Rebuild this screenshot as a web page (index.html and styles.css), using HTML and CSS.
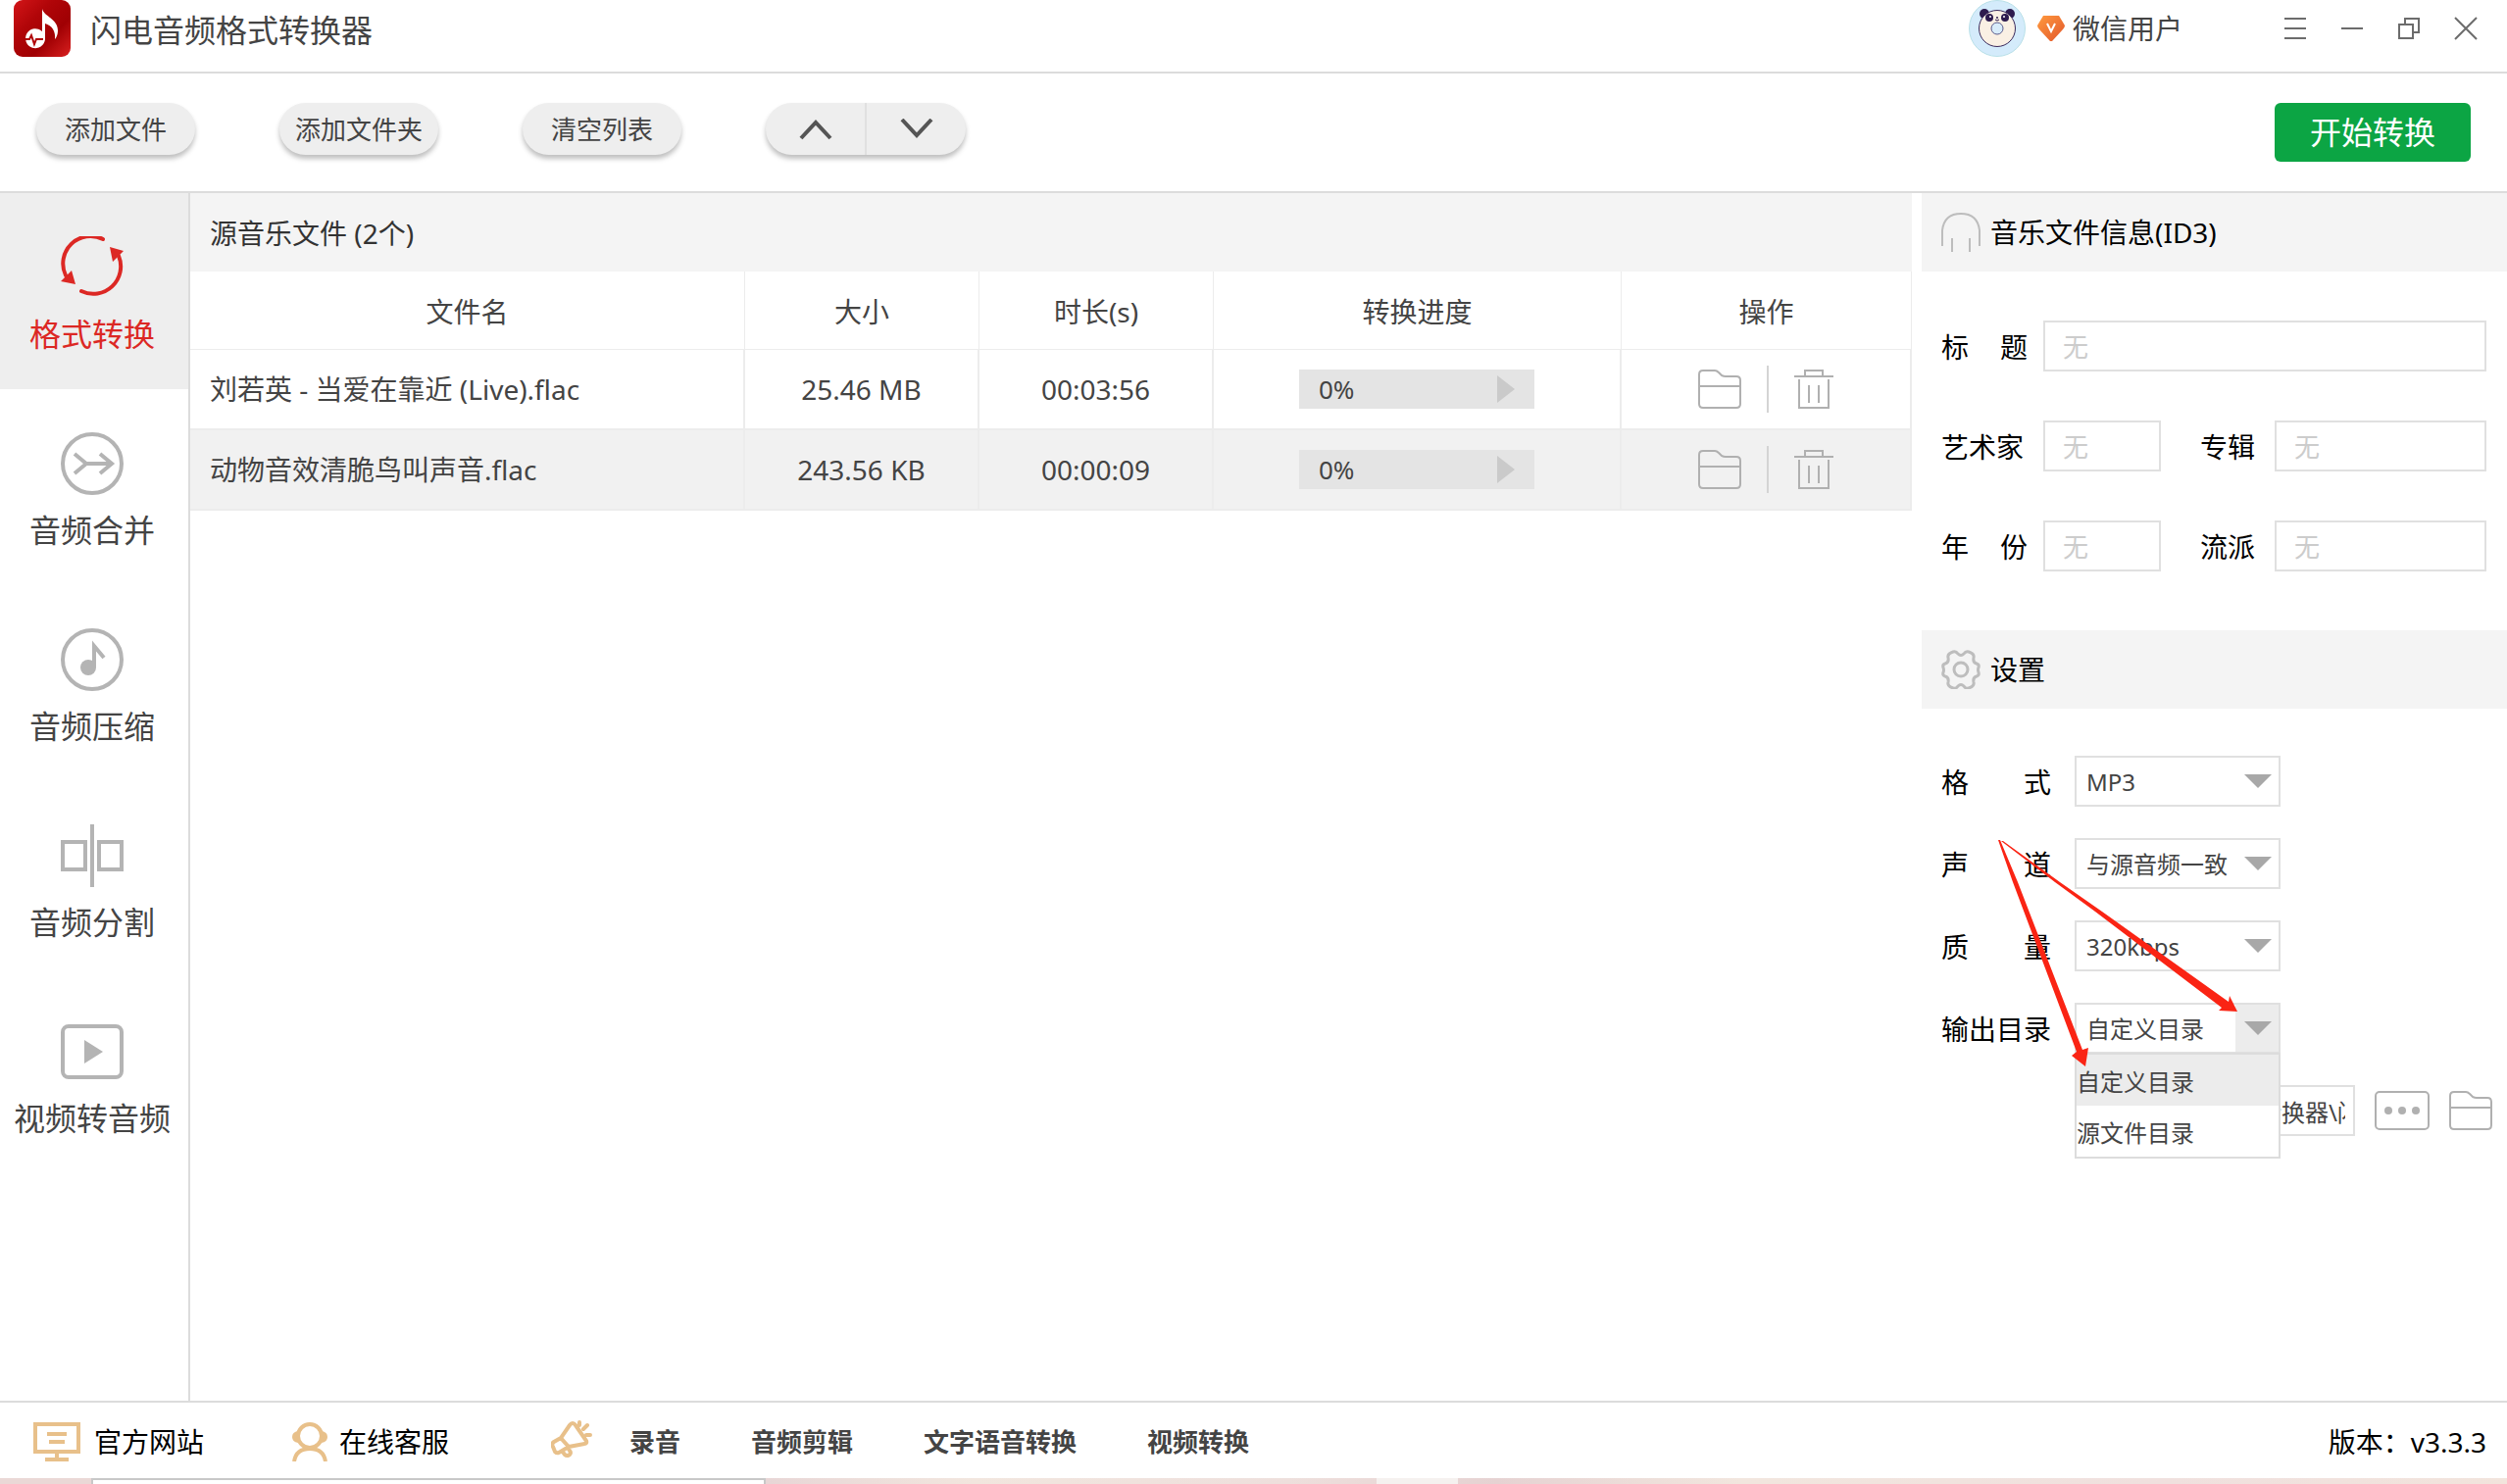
FILE: index.html
```html
<!DOCTYPE html>
<html lang="zh-CN">
<head>
<meta charset="utf-8">
<meta name="viewport" content="width=device-width, initial-scale=1">
<title>闪电音频格式转换器</title>
<link rel="stylesheet" href="styles.css">
</head>
<body>
<svg width="0" height="0" class="defs" aria-hidden="true">
  <symbol id="folder" viewBox="0 0 44 40">
    <path d="M1 35V5q0-4 4-4h12q2 0 4 2l3 3q2 1 4 1h11q4 0 4 4v24q0 4-4 4H5q-4 0-4-4zM1 17h42" fill="none" stroke="#b0b0b0" stroke-width="2"/>
  </symbol>
  <symbol id="trash" viewBox="0 0 40 40">
    <path d="M0 7h40M11 7V1h18v6M5 10v29h30V10M15 16v18M25 16v18" fill="none" stroke="#b0b0b0" stroke-width="2"/>
  </symbol>
</svg>

<div class="app">
  <header class="titlebar">
    <svg class="logo" viewBox="0 0 58 58" aria-hidden="true">
      <defs><linearGradient id="lg" x1="0" y1="0" x2="1" y2="1"><stop offset="0" stop-color="#d31518"/><stop offset=".35" stop-color="#b00508"/><stop offset=".65" stop-color="#a00003"/><stop offset="1" stop-color="#d92020"/></linearGradient></defs>
      <rect width="58" height="58" rx="9" fill="url(#lg)"/>
      <path d="M29 9c2 8 16 10 16 22 0 5-2 8-3 9 1-8-3-14-10-16v16a10 10 0 1 1-3-8z" fill="#fff"/>
      <path d="M12 40h4l2-4 3 9 2-5h7" fill="none" stroke="#b00508" stroke-width="2"/>
    </svg>
    <h1 class="app-name">闪电音频格式转换器</h1>
    <div class="user">
      <svg class="avatar" viewBox="0 0 58 58" aria-hidden="true">
        <circle cx="29" cy="29" r="28.500" fill="#d4ebfb" stroke="#b9e0e8"/>
        <circle cx="16" cy="14" r="5" fill="#2d1b4e"/><circle cx="42" cy="14" r="5" fill="#2d1b4e"/>
        <circle cx="29" cy="29" r="18.500" fill="#faf0e4" stroke="#3b2a5c"/>
        <circle cx="21" cy="18" r="4" fill="#2d1b4e"/><circle cx="37" cy="18" r="4" fill="#2d1b4e"/>
        <circle cx="22" cy="17" r="1" fill="#fff"/><circle cx="36" cy="17" r="1" fill="#fff"/>
        <path d="M27 20q2 2 4 0" fill="none" stroke="#2d1b4e"/><circle cx="29" cy="18" r="1" fill="#2d1b4e"/>
        <circle cx="29" cy="29" r="6" fill="#d8ecfa" stroke="#5b5c8c"/>
      </svg>
      <svg class="gem" viewBox="0 0 28 26" aria-hidden="true">
        <defs><linearGradient id="gg" x1="0" y1="0" x2="1" y2="1"><stop offset="0" stop-color="#ff9a3e"/><stop offset="1" stop-color="#e2572c"/></linearGradient></defs>
        <path d="M6 0h16l6 10q0 2-2 4L15 26h-2L2 14q-2-2-2-4z" fill="url(#gg)"/>
        <path d="M10 8l4 8 4-8" fill="none" stroke="#fff" stroke-width="2"/>
      </svg>
      <span>微信用户</span>
    </div>
    <div class="window-controls">
      <button type="button" aria-label="菜单"><svg viewBox="0 0 24 24"><path d="M1 2h22M1 12h22M1 22h22"/></svg></button>
      <button type="button" aria-label="最小化"><svg viewBox="0 0 24 24"><path d="M1 12h22"/></svg></button>
      <button type="button" aria-label="还原"><svg viewBox="0 0 24 24"><path d="M8 7V2h14v14h-6M2 8h14v14H2z"/></svg></button>
      <button type="button" aria-label="关闭"><svg viewBox="0 0 24 24"><path d="M1 1l22 22M23 1L1 23"/></svg></button>
    </div>
  </header>

  <div class="toolbar">
    <button type="button" class="pill">添加文件</button>
    <button type="button" class="pill">添加文件夹</button>
    <button type="button" class="pill">清空列表</button>
    <div class="pill-pair">
      <button type="button" aria-label="上移"><svg viewBox="0 0 34 22"><path d="M2 20L17 4l15 16"/></svg></button>
      <button type="button" aria-label="下移"><svg viewBox="0 0 34 22"><path d="M2 1l15 16L32 1"/></svg></button>
    </div>
    <button type="button" class="start">开始转换</button>
  </div>

  <div class="body">
    <nav class="sidebar">
      <a href="#format" class="nav-item active">
        <svg viewBox="0 0 64 64"><path d="M43 3A28 28 0 0 0 5 40M21 56A28 28 0 0 0 59 20" fill="none" stroke="#dc2824" stroke-width="4" stroke-linecap="round"/><path d="M50 11l14 4-11 11zM0 46l11-11 4 14z" fill="#dc2824"/></svg>
        <span>格式转换</span>
      </a>
      <a href="#merge" class="nav-item">
        <svg viewBox="0 0 64 64"><g fill="none" stroke="#b4b4b4" stroke-width="4"><circle cx="32" cy="32" r="30"/><path d="M14 22l12 10-12 10M26 32h25M40 22l12 10-12 10"/></g></svg>
        <span>音频合并</span>
      </a>
      <a href="#compress" class="nav-item">
        <svg viewBox="0 0 64 64"><circle cx="32" cy="32" r="30" fill="none" stroke="#b4b4b4" stroke-width="4"/><circle cx="28" cy="40" r="8" fill="#b4b4b4"/><path d="M34 40V18l10 12" fill="none" stroke="#b4b4b4" stroke-width="4"/></svg>
        <span>音频压缩</span>
      </a>
      <a href="#split" class="nav-item">
        <svg viewBox="0 0 64 64"><path d="M32 0v64M2 18h23v28H2zM39 18h23v28H39z" fill="none" stroke="#b4b4b4" stroke-width="4"/></svg>
        <span>音频分割</span>
      </a>
      <a href="#video" class="nav-item">
        <svg viewBox="0 0 64 64"><rect x="2" y="6" width="60" height="52" rx="6" fill="none" stroke="#b4b4b4" stroke-width="4"/><path d="M24 20l19 12-19 12z" fill="#b4b4b4"/></svg>
        <span>视频转音频</span>
      </a>
    </nav>

    <main class="files">
      <h2 class="band">源音乐文件 (2个)</h2>
      <table>
        <colgroup><col><col class="c-size"><col class="c-time"><col class="c-progress"><col class="c-ops"></colgroup>
        <thead><tr><th>文件名</th><th>大小</th><th>时长(s)</th><th>转换进度</th><th>操作</th></tr></thead>
        <tbody>
          <tr>
            <td class="name">刘若英 - 当爱在靠近 (Live).flac</td><td>25.46 MB</td><td>00:03:56</td>
            <td><div class="progress"><span>0%</span><svg viewBox="0 0 18 28"><path d="M0 0l18 14L0 28z"/></svg></div></td>
            <td><div class="ops"><button type="button" aria-label="打开文件夹"><svg class="i-folder"><use href="#folder"/></svg></button><i></i><button type="button" aria-label="删除"><svg class="i-trash"><use href="#trash"/></svg></button></div></td>
          </tr>
          <tr class="selected">
            <td class="name">动物音效清脆鸟叫声音.flac</td><td>243.56 KB</td><td>00:00:09</td>
            <td><div class="progress"><span>0%</span><svg viewBox="0 0 18 28"><path d="M0 0l18 14L0 28z"/></svg></div></td>
            <td><div class="ops"><button type="button" aria-label="打开文件夹"><svg class="i-folder"><use href="#folder"/></svg></button><i></i><button type="button" aria-label="删除"><svg class="i-trash"><use href="#trash"/></svg></button></div></td>
          </tr>
        </tbody>
      </table>
    </main>

    <aside class="panel">
      <h2 class="band panel-head">
        <svg viewBox="0 0 40 40"><path d="M1 34V18Q3 1 20 1t19 17v16M11 26v14M29 26v14" fill="none" stroke="#bdbdbd" stroke-width="2"/></svg>
        音乐文件信息(ID3)
      </h2>
      <form class="info">
        <label for="title" class="spread">标 题</label><input id="title" class="wide" placeholder="无">
        <label for="artist">艺术家</label><input id="artist" placeholder="无">
        <label for="album" class="second">专辑</label><input id="album" placeholder="无">
        <label for="year" class="spread">年 份</label><input id="year" placeholder="无">
        <label for="genre" class="second">流派</label><input id="genre" placeholder="无">
      </form>
      <h2 class="band panel-head">
        <svg viewBox="0 0 40 40"><g fill="none" stroke="#bdbdbd" stroke-width="3"><circle cx="20" cy="20" r="7"/><path d="M12 2q3-1 5 2 3 3 6 0 2-3 5-2 6 2 5 6-1 5 3 6 3 1 2 4-1 2 0 5 1 3-2 4-4 1-3 6 1 4-5 6-3 1-5-2-3-3-6 0-2 3-5 2-6-2-5-6 1-5-3-6-3-1-2-4 1-2 0-5-1-3 2-4 4-1 3-6-1-4 5-6z"/></g></svg>
        设置
      </h2>
      <form class="settings">
        <label for="format" class="spread">格 式</label>
        <div class="select"><select id="format"><option>MP3</option></select><svg viewBox="0 0 28 14"><path d="M0 0h28L14 14z"/></svg></div>
        <label for="channel" class="spread">声 道</label>
        <div class="select"><select id="channel"><option>与源音频一致</option></select><svg viewBox="0 0 28 14"><path d="M0 0h28L14 14z"/></svg></div>
        <label for="quality" class="spread">质 量</label>
        <div class="select"><select id="quality"><option>320kbps</option></select><svg viewBox="0 0 28 14"><path d="M0 0h28L14 14z"/></svg></div>
        <label for="outdir">输出目录</label>
        <div class="select open"><select id="outdir"><option>自定义目录</option><option>源文件目录</option></select><svg viewBox="0 0 28 14"><path d="M0 0h28L14 14z"/></svg>
          <ul class="menu" role="listbox"><li role="option" aria-selected="true">自定义目录</li><li role="option">源文件目录</li></ul>
        </div>
        <div class="path">
          <input aria-label="输出路径" value="D:\闪电音频格式转换器\闪电">
          <button type="button" aria-label="浏览"><svg class="i-more" viewBox="0 0 56 40"><rect x="1" y="1" width="54" height="38" rx="4" fill="none" stroke="#b0b0b0" stroke-width="2"/><g fill="#b0b0b0"><circle cx="14" cy="20" r="4"/><circle cx="28" cy="20" r="4"/><circle cx="42" cy="20" r="4"/></g></svg></button>
          <button type="button" aria-label="打开输出目录"><svg class="i-folder"><use href="#folder"/></svg></button>
        </div>
        <svg class="arrows" viewBox="0 0 250 240" aria-hidden="true"><path d="M0 0h2L20 43 86 214l6-2-3 19-14-11 5-4L15 43zM3 1h2L63 43l43 30 129 92 1-6 8 16-19-1 3-3L99 73 58 43z"/></svg>
      </form>
    </aside>
  </div>

  <footer class="footer">
    <a href="#site" class="f-site"><svg viewBox="0 0 48 40"><path d="M2 2h44v28H2zM24 30v8M12 38h24M14 12h20M16 20h16" fill="none" stroke="#e8c08a" stroke-width="4"/></svg>官方网站</a>
    <a href="#service" class="f-service"><svg viewBox="0 0 36 40"><g fill="none" stroke="#e8c08a" stroke-width="4"><circle cx="18" cy="14" r="12"/><path d="M2 40Q4 27 18 27t16 13"/></g><path d="M6 9v12q-6-1-6-6t6-6zM30 9v12q6-1 6-6t-6-6z" fill="#e8c08a"/></svg>在线客服</a>
    <svg class="horn" viewBox="0 0 42 38" aria-hidden="true"><path d="M19 5q3-4 6 0l11 16q1 3-2 3l-16 3-8-9zM10 18l-7 4q-3 2-1 5l2 5q2 2 4 1l10-6M11 31l3 4q3 2 5 0 2-2 0-4l-2-3M29 5V2M33 9l4-4M36 15h4" fill="none" stroke="#e8c08a" stroke-width="4" stroke-linecap="round"/></svg>
    <div class="links"><a href="#rec">录音</a><a href="#edit">音频剪辑</a><a href="#tts">文字语音转换</a><a href="#vconv">视频转换</a></div>
    <span class="version">版本：v3.3.3</span>
  </footer>
  <div class="desktop"><div class="behind"></div><div class="wallpaper"><i></i></div></div>
</div>
</body>
</html>
```
FILE: styles.css
```css
* { box-sizing: border-box; }
body {
  margin: 0;
  background: #fff;
  color: #444;
  font-family: "Noto Sans", "Noto Sans CJK SC", sans-serif;
  font-size: 28px;
  font-weight: 400;
  line-height: 40px;
}
h1, h2, ul { margin: 0; padding: 0; font-weight: inherit; }
button, input, select { font: inherit; color: inherit; border-radius: 0; }
button { padding: 0; border: 0; background: none; }
a { color: inherit; text-decoration: none; }
svg { display: block; flex: none; }
.defs { position: absolute; }

.app { display: flex; flex-direction: column; min-height: 100vh; }

/* title bar */
.titlebar {
  display: flex;
  align-items: flex-start;
  height: 75px;
  padding: 0 30px 0 14px;
  border-bottom: 2px solid #dcdcdc;
}
.logo { width: 58px; height: 58px; }
.app-name { margin-left: 20px; font-size: 32px; line-height: 62px; }
.user { display: flex; align-items: center; margin-left: auto; height: 58px; }
.avatar { width: 58px; height: 58px; }
.gem { width: 28px; height: 26px; margin: 0 8px 0 12px; }
.window-controls { display: flex; align-items: center; gap: 34px; height: 58px; margin-left: 103px; }
.window-controls svg { width: 24px; height: 24px; fill: none; stroke: #6c6c6c; stroke-width: 2; }

/* toolbar */
.toolbar {
  display: flex;
  align-items: flex-start;
  gap: 86px;
  height: 122px;
  padding: 30px 37px;
  border-bottom: 2px solid #dcdcdc;
}
.pill, .pill-pair {
  height: 53px;
  border-radius: 27px;
  background: #eee;
  box-shadow: 0 4px 5px rgba(0, 0, 0, .25);
}
.pill { width: 162px; font-size: 26px; line-height: 52px; white-space: nowrap; }
.pill-pair { display: flex; width: 204px; }
.pill-pair button { flex: 1; display: grid; place-items: center; }
.pill-pair button + button { border-left: 2px solid #e0e0e0; }
.pill-pair svg { width: 34px; height: 22px; fill: none; stroke: #555; stroke-width: 4; }
.start {
  width: 200px;
  height: 60px;
  margin-left: auto;
  border-radius: 6px;
  background: #0ca544;
  color: #fff;
  font-size: 32px;
}

/* body */
.body { display: flex; flex: 1; }
.sidebar { flex: none; width: 194px; border-right: 2px solid #dcdcdc; }
.nav-item {
  display: flex;
  flex-direction: column;
  align-items: center;
  gap: 16px;
  height: 200px;
  padding: 44px 4px 0 0;
  font-size: 32px;
  white-space: nowrap;
}
.nav-item svg { width: 64px; height: 64px; }
.nav-item.active { background: #eee; color: #dc2824; }

.files { flex: 1; min-width: 0; margin-right: 10px; }
.band { height: 80px; padding: 0 20px; background: #f4f4f4; font-size: 28px; line-height: 82px; color: #333; }
table { width: 100%; table-layout: fixed; border-collapse: separate; border-spacing: 0; }
.c-size, .c-time { width: 239px; }
.c-progress { width: 416px; }
.c-ops { width: 296px; }
th { height: 80px; padding: 2px 0 0; font-weight: inherit; border-right: 1px solid #ececec; border-bottom: 1px solid #ececec; }
td { height: 82px; padding: 0; text-align: center; border-right: 2px solid #ececec; border-bottom: 2px solid #ececec; }
td.name { padding-left: 20px; text-align: left; }
.selected td { background: #f1f1f1; }
.progress {
  display: flex;
  align-items: center;
  justify-content: space-between;
  width: 240px;
  height: 40px;
  margin: 0 auto;
  padding: 0 20px;
  background: #e4e4e4;
  font-size: 26px;
}
.progress svg { width: 18px; height: 28px; fill: #cacaca; }
.ops { display: flex; align-items: center; justify-content: center; gap: 26px; }
.ops i { width: 2px; height: 48px; background: #d4d4d4; }
.i-folder { width: 44px; height: 40px; }
.i-trash { width: 40px; height: 40px; }
.i-more { width: 56px; height: 40px; }

/* right panel */
.panel { flex: none; width: 597px; color: #000; }
.panel-head { display: flex; align-items: center; gap: 10px; color: #000; }
.panel-head svg { width: 40px; height: 40px; }
.info {
  display: grid;
  grid-template-columns: 104px 120px 116px 1fr;
  grid-auto-rows: 52px;
  row-gap: 50px;
  align-items: center;
  padding: 50px 21px 60px 20px;
}
.info label, .settings label { padding-top: 2px; white-space: nowrap; }
.info label { width: 88px; }
.info .second { width: auto; padding-left: 40px; }
.wide { grid-column: 2 / -1; }
.spread { text-align: justify; text-align-last: justify; }
input {
  width: 100%;
  min-width: 0;
  height: 52px;
  padding: 2px 18px 0;
  border: 2px solid #e0e0e0;
  background: #fff;
  font-size: 26px;
}
input::placeholder { color: #ccc; opacity: 1; }

.settings {
  position: relative;
  display: grid;
  grid-template-columns: 112px 210px;
  grid-auto-rows: 52px;
  gap: 32px 24px;
  align-items: center;
  padding: 48px 15px 48px 20px;
}
.select { position: relative; height: 52px; }
select {
  width: 100%;
  height: 52px;
  padding: 2px 44px 0 10px;
  border: 2px solid #e0e0e0;
  background: #fff;
  color: #444;
  font-size: 24px;
  appearance: none;
}
.select > svg { position: absolute; top: 19px; right: 9px; width: 28px; height: 14px; fill: #a8a8a8; pointer-events: none; }
.open select { background: linear-gradient(#ececec, #ececec) right / 44px 100% no-repeat #fff; }
.menu {
  position: absolute;
  z-index: 1;
  top: 51px;
  left: 0;
  right: 0;
  border: 2px solid #dcdcdc;
  background: #fff;
  list-style: none;
  color: #444;
  font-size: 24px;
}
.menu li { height: 52px; line-height: 56px; }
.menu li[aria-selected] { background: #ececec; }
.path { grid-column: 2; display: flex; align-items: center; gap: 20px; width: 426px; }
.path input { flex: none; width: 286px; padding: 0 8px; color: #444; font-size: 24px; }
.arrows { position: absolute; z-index: 2; left: 78px; top: 134px; width: 250px; height: 240px; fill: #fa2414; }

/* footer */
.footer { display: flex; align-items: center; height: 79px; padding: 2px 21px 0 34px; border-top: 2px solid #dcdcdc; color: #000; }
.footer a { display: flex; align-items: center; }
.f-site { gap: 14px; }
.f-site svg { width: 48px; height: 40px; }
.f-service { gap: 12px; margin-left: 90px; }
.f-service svg { width: 36px; height: 40px; }
.horn { width: 42px; height: 38px; margin: 0 0 6px 104px; }
.links { display: flex; gap: 72px; margin-left: 38px; color: #444; font-size: 26px; font-weight: 700; }
.version { margin-left: auto; }
.desktop { display: flex; height: 6px; padding-left: 93px; background: #ead8d6; }
.behind { width: 688px; border: solid #c8c8c8; border-width: 2px 2px 0; background: #fff; }
.wallpaper { flex: 1; padding-left: 623px; background: linear-gradient(90deg, #e8d6d6, #f2e6de 12%, #eedfdc 30%, #e6d2d2 42%, #f2e6de 56%, #f0e0de 80%, #f2e4dc); }
.wallpaper i { display: block; width: 83px; height: 6px; background: #f5f1ef; }
```
